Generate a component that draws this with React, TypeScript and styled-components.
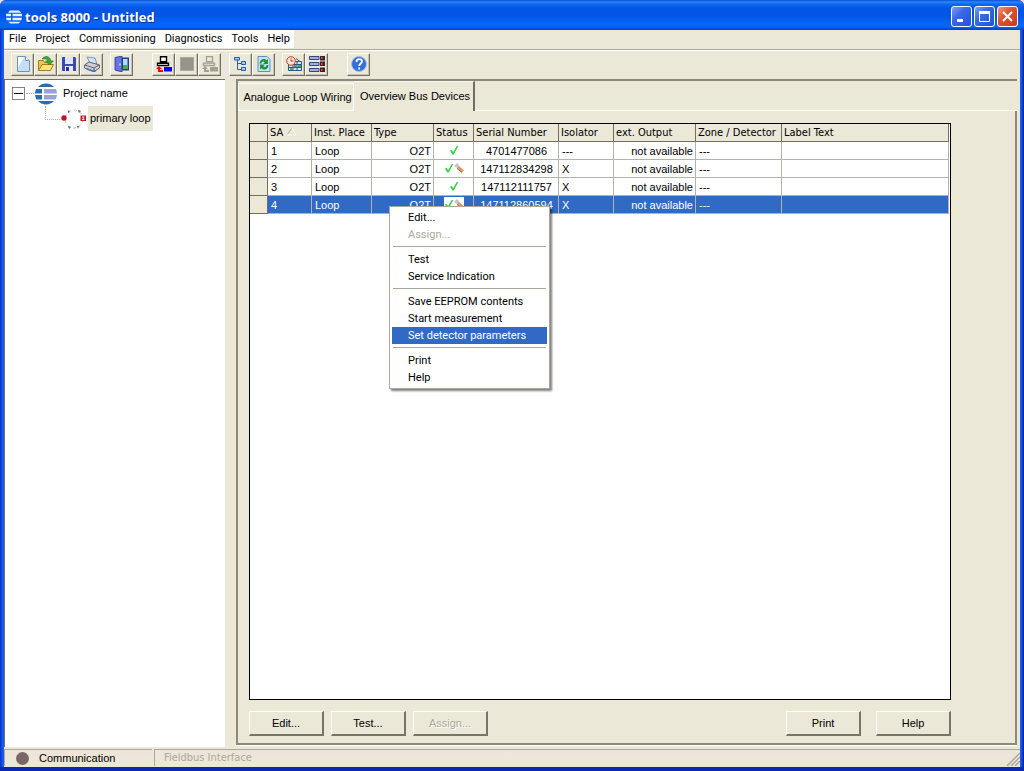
import React, { useState } from "react";
import styled, { createGlobalStyle, css } from "styled-components";

const face = "#ebe8d8";
const shade = "#aca899";
const dark = "#716f64";
const select = "#316ac5";
const menuFont = 'Roboto, "Noto Sans", sans-serif';
const headFont = '"DejaVu Sans Condensed", "Noto Sans", sans-serif';
const sans = '"Liberation Sans", Arial, sans-serif';

const Global = createGlobalStyle`
  *, *::before, *::after { box-sizing: border-box; }
  html, body { margin: 0; background: #f3ddd6; }
  body { font: 11px/14px ${sans}; color: #000; }
  button { font: inherit; color: inherit; margin: 0; padding: 0; border: 0; background: none; }
  ul { list-style: none; margin: 0; padding: 0; }
`;

const Frame = styled.div`
  display: flex;
  flex-direction: column;
  min-height: 100vh;
  padding: 0 4px 4px;
  border-radius: 6px 6px 0 0;
  background: linear-gradient(90deg, #0a30c8 0, #1660ee 3px, #1660ee calc(100% - 3px), #0018a0 100%);
  box-shadow: inset 0 -4px 0 #0a28b4;
`;

const TitleBar = styled.header`
  display: flex;
  align-items: center;
  gap: 3px;
  height: 30px;
  margin: 0 -4px;
  padding: 3px 6px 0;
  border-radius: 6px 6px 0 0;
  background: linear-gradient(#0a4fd0 0, #2a86fb 2px, #1168f2 4px, #0456e4 8px, #0256e6 16px, #0466fa 24px, #0464f8 27px, #0240c4 30px);
`;

const Title = styled.h1`
  flex: 1;
  margin: 0;
  color: #fff;
  font: bold 13px/16px "Open Sans", "Noto Sans", sans-serif;
  text-shadow: 1px 1px 0 #0a2f90;
`;

const Captions = styled.div`
  display: flex;
  gap: 2px;
`;

const Caption = styled.button<{ $close?: boolean }>`
  display: grid;
  place-items: center;
  width: 21px;
  height: 21px;
  border: 1px solid #fff;
  border-radius: 3px;
  background: ${(p) =>
    p.$close
      ? "linear-gradient(135deg, #ee9a80, #de5430 40%, #c8381c)"
      : "linear-gradient(135deg, #7d9ff5, #3a68e4 40%, #2152d8)"};
`;

const MenuBar = styled.nav`
  display: flex;
  height: 20px;
  background: ${face};
  border-bottom: 1px solid ${shade};
`;

const MenuList = styled.div`
  display: flex;
  height: 18px;
  background: #fff;
`;

const MenuButton = styled.button`
  padding: 0 4px 0 5px;
  font: 11px/18px ${menuFont};
`;

const ToolBar = styled.div`
  display: flex;
  align-items: center;
  height: 29px;
  padding: 0 0 2px 7px;
  background: ${face};
  border-top: 1px solid #fff;
`;

const ToolGroup = styled.div<{ $gap: number }>`
  display: flex;
  margin-right: ${(p) => p.$gap}px;
`;

const Tool = styled.button`
  display: grid;
  place-items: center;
  width: 23px;
  height: 23px;
  border: 1px solid;
  border-color: #fff ${dark} ${dark} #fff;
  box-shadow: inset -1px -1px 0 #c5c2b3;
`;

const Body = styled.div`
  flex: 1;
  display: flex;
  gap: 11px;
  background: ${face};
`;

const TreePane = styled.aside`
  flex: 0 0 221px;
  padding: 1px 0 0 7px;
  background: #fff;
  border: solid ${dark};
  border-width: 1px 0 0 1px;
`;

const TreeRow = styled.div<{ $level?: number }>`
  display: flex;
  align-items: center;
  height: 25px;
  padding-left: ${(p) => (p.$level ? 38 : 0)}px;
`;

const TreeLabel = styled.span<{ $selected?: boolean }>`
  padding: ${(p) => (p.$selected ? "0 2px" : "0 6px")};
  line-height: 25px;
  background: ${(p) => (p.$selected ? face : "none")};
`;

const Expander = styled.button`
  display: grid;
  place-items: center;
  width: 13px;
  height: 13px;
  border: 1px solid #848484;
  &::before { content: ""; width: 9px; height: 1px; background: #000; }
`;

const Dots = styled.span`
  width: 8px;
  margin: 0 1px;
  border-top: 1px dotted #b0b0b0;
`;

const Elbow = styled.span`
  align-self: flex-start;
  width: 15px;
  height: 14px;
  margin-left: -5px;
  border: dotted #b0b0b0;
  border-width: 0 0 1px 1px;
`;

const Main = styled.main`
  flex: 1;
  min-width: 0;
  display: flex;
  flex-direction: column;
  margin: 0 3px 2px 0;
  border: solid #8b897b;
  border-width: 2px 0 2px 2px;
  box-shadow: 0 1px 0 #fff;
`;

const TabStrip = styled.div`
  display: flex;
  align-items: flex-end;
  height: 30px;
  &::after { content: ""; flex: 1; align-self: flex-end; border-top: 1px solid #fff; }
`;

const Tab = styled.button<{ $active?: boolean }>`
  padding-left: 3px;
  ${(p) =>
    p.$active
      ? css`
          width: 121px;
          height: 30px;
          padding-bottom: 2px;
          border: solid;
          border-width: 1px 2px 0 0;
          border-color: #f6f5ee ${dark} transparent transparent;
        `
      : css`
          width: 116px;
          height: 28px;
          border: 1px solid #fff;
        `}
`;

const Page = styled.section`
  flex: 1;
  display: flex;
  flex-direction: column;
  padding: 12px 64px 7px 11px;
  border-right: 2px solid #8b897b;
`;

const GridBox = styled.div`
  position: relative;
  flex: 1;
  min-height: 300px;
  padding-right: 1px;
  border: 1px solid #000;
  background: #fff;
`;

const Grid = styled.table`
  width: 100%;
  border-collapse: separate;
  border-spacing: 0;
  table-layout: fixed;
`;

const Col = styled.col<{ $w?: number }>`
  width: ${(p) => (p.$w ? `${p.$w}px` : "auto")};
`;

const Head = styled.th`
  height: 18px;
  padding: 1px 2px 0;
  overflow: hidden;
  border: solid ${dark};
  border-width: 0 1px 1px 0;
  background: ${face};
  font: 11px/16px ${headFont};
  text-align: left;
  white-space: nowrap;
`;

const Cell = styled.td<{ $align?: string; $selected?: boolean }>`
  height: 18px;
  padding: 1px 2px 0 3px;
  border: solid #b4b2ac;
  border-width: 0 1px 1px 0;
  line-height: 16px;
  white-space: nowrap;
  text-align: ${(p) => p.$align ?? "left"};
  ${(p) => p.$selected && css`background: ${select}; color: #fff;`}
`;

const Gutter = styled.td`
  padding: 0;
  border: solid ${dark};
  border-width: 0 1px 1px 0;
  background: ${face};
`;

const StatusMark = styled.span<{ $lit?: boolean }>`
  display: inline-flex;
  vertical-align: top;
  height: 14px;
  background: ${(p) => (p.$lit ? "#fff" : "none")};
`;

const ContextMenu = styled.div`
  position: absolute;
  left: 139px;
  top: 82px;
  width: 161px;
  padding: 2px 2px;
  border: 1px solid ${shade};
  background: #fff;
  box-shadow: 2px 2px 2px rgba(0, 0, 0, 0.5);
`;

const ContextItem = styled.button<{ $current?: boolean }>`
  display: block;
  width: 100%;
  height: 17px;
  padding-left: 16px;
  font: 11px/16px ${menuFont};
  text-align: left;
  white-space: nowrap;
  &:disabled { color: ${shade}; }
  ${(p) => p.$current && css`background: ${select}; color: #fff;`}
`;

const Rule = styled.hr`
  height: 1px;
  margin: 3px 1px 4px;
  border: 0;
  background: ${shade};
`;

const Actions = styled.div`
  display: flex;
  gap: 7px;
  margin-top: 11px;
`;

const RightActions = styled.div`
  display: flex;
  gap: 15px;
  margin-left: auto;
`;

const Action = styled.button`
  width: 75px;
  height: 25px;
  border: solid;
  border-width: 1px 2px 2px 1px;
  border-color: #fff #77756a #77756a #fff;
  &:disabled { color: ${shade}; text-shadow: 1px 1px 0 #fff; }
`;

const StatusBar = styled.footer`
  display: flex;
  gap: 2px;
  height: 20px;
  padding: 2px 0 1px;
  background: ${face};
`;

const StatusPanel = styled.div<{ $grow?: boolean }>`
  flex: ${(p) => (p.$grow ? "1" : "0 0 148px")};
  display: flex;
  align-items: center;
  gap: 10px;
  padding-left: ${(p) => (p.$grow ? 9 : 11)}px;
  border: solid ${shade};
  border-width: 1px 0 0 1px;
  background: linear-gradient(#f0e3da, ${face} 70%);
  color: ${(p) => (p.$grow ? shade : "#000")};
  font-family: ${(p) => (p.$grow ? headFont : sans)};
`;

const Lamp = styled.span`
  width: 13px;
  height: 13px;
  border-radius: 50%;
  background: #7b6667;
`;

const Grip = styled.svg`
  align-self: flex-end;
  margin-left: auto;
`;

const Brand = ({ size, tone }: { size: number; tone?: boolean }) => (
  <svg width={size} height={size} viewBox="0 0 22 22" aria-hidden="true">
    {tone ? (
      <>
        <path d="M3 4a11 11 0 0 1 16 0zM3 18a11 11 0 0 0 16 0zM1 6h6v4.500H0A11 11 0 0 1 1 6zM0 12h7v4.500H1.500A11 11 0 0 1 0 12z" fill="#2a6cb0" />
        <path d="M9 6h12a11 11 0 0 1 1 4.500H9zM9 12h13a11 11 0 0 1-1.500 4.500H9z" fill="#98a4d6" />
      </>
    ) : (
      <path d="M5 2h13l3 3H3zM0 6.500h7v3.500H0zM9 6.500h13v3.500H9zM0 12h7v3.500H1zM9 12h13l-1 3.500H9zM3 17.500h17l-3 2.500H6z" fill="#e8f0ff" />
    )}
  </svg>
);

const LoopIcon = () => (
  <svg width="28" height="22" viewBox="0 0 28 22" aria-hidden="true">
    <ellipse cx="14" cy="11" rx="9" ry="9" fill="none" stroke="#b8b8b8" strokeDasharray="3 3" />
    <path d="M8 2l2 2-2 1zM18 2l3 1-2 2zM8 18l3 1-2 2zM17 18l2 0-1 3z" fill="#506070" />
    <circle cx="4" cy="10" r="2.7" fill="#c4141c" />
    <path d="M20.500 7.500h5.500v5.500h-5.500z" fill="#c4141c" />
    <path d="M22 9h2.500M22 11.500h2.500M23.200 9v2" stroke="#fff" strokeWidth=".9" />
  </svg>
);

const Tick = () => (
  <svg width="10" height="14" viewBox="0 0 11 14" aria-label="OK" role="img">
    <path d="M1 7.500l2-.5 1.500 2.500L8.500 2.500l1.700 0-5 9.500-1.500 0z" fill="#2fd23c" />
  </svg>
);

const Wrench = () => (
  <svg width="10" height="14" viewBox="0 0 10 14" aria-label="Service" role="img">
    <path d="M0 5l3-3 2 2v2L3 7z" fill="#c9c3c8" />
    <path d="M4 6l5 4.500" stroke="#e09a66" strokeWidth="3" />
    <path d="M3 7.500l5 4" stroke="#a6683f" strokeWidth="1" />
  </svg>
);

const icons: Record<string, React.ReactNode> = {
  New: (
    <>
      <path d="M2.500 .5h8l4 4v11h-12z" fill="#c5def8" stroke="#6f93c0" />
      <path d="M3 1h6l-6 11z" fill="#fff" />
      <path d="M10.500.5v4h4" fill="#fff" stroke="#6f93c0" />
    </>
  ),
  Open: (
    <>
      <path d="M.5 14V4.500h5l1 2h6V14z" fill="#f0c648" stroke="#a87d1c" />
      <path d="M.5 14.500L4 8.500h11.500l-3 6z" fill="#ffe27a" stroke="#a87d1c" />
      <path d="M4 3c3-4 8-3 9 2h2.500l-4 4-4-4h2.500C9.500 3 7 2.500 4 3z" fill="#39a83a" stroke="#1d7427" strokeWidth=".6" />
    </>
  ),
  Save: (
    <>
      <path d="M1 1h13l1 1v13H1z" fill="#3a48bc" />
      <path d="M4 1h8v7H4z" fill="#dfe4fb" />
      <path d="M4 10h8v5H4z" fill="#e9ecff" />
      <path d="M5 11h3v4H5z" fill="#26309a" />
    </>
  ),
  Print: (
    <>
      <path d="M3 1l8 1 2 6-7-1z" fill="#cfe3fb" stroke="#6c84a8" strokeWidth=".8" />
      <path d="M.5 9L5 6l10.500 3v3L10 15.500.5 12z" fill="#cfcfd4" stroke="#55555c" strokeWidth=".9" />
      <path d="M1 9l9 3 5-3M10 12v3" fill="none" stroke="#55555c" strokeWidth=".9" />
      <path d="M3 13l7 2.500 2-1" fill="none" stroke="#3d72c8" strokeWidth="1.500" />
    </>
  ),
  Exit: (
    <>
      <path d="M2 1.500h13v13H2z" fill="#2a37a0" />
      <path d="M9 3h4.500v10H9z" fill="#a9e0f5" />
      <path d="M9 9h4.500v4H9z" fill="#4bad4a" />
      <path d="M1 1.500L8 0v16l-7-2z" fill="#6674dc" stroke="#26309a" strokeWidth=".8" />
      <path d="M6 7.500v2" stroke="#fff" />
    </>
  ),
  "Read device": (
    <>
      <path d="M4.500 .7h6v5h-6zM1.500 7.200h11v2.300h-11z" fill="#fff" stroke="#000" strokeWidth="1.400" />
      <path d="M0 13l3-3 3 3z" fill="#f00" />
      <path d="M3 12v3h4" stroke="#f00" strokeWidth="2" fill="none" />
      <path d="M8 11h8v4.500H8z" fill="#00f" />
    </>
  ),
  Stop: <path d="M1.500 1.500h13v13h-13z" fill="#96948a" stroke="#aaa79b" />,
  "Write device": (
    <>
      <path d="M4.500 .7h6v5h-6zM1.500 7.200h11v2.300h-11z" fill="none" stroke="#a19e92" strokeWidth="1.300" />
      <path d="M0 13l3-3 3 3zM8 11h8v4.500H8z" fill="#a19e92" />
      <path d="M3 12v3h4" stroke="#a19e92" strokeWidth="2" fill="none" />
    </>
  ),
  Tree: (
    <>
      <path d="M4.500 4v9.500H9M4.500 7.500H9" fill="none" stroke="#2a5fb8" />
      <path d="M1.500 1.500h5v2.500h-5zM8.500 5.500h4v3h-4zM8.500 11.500h4v3h-4z" fill="#a9cdf5" stroke="#2458b4" />
    </>
  ),
  Refresh: (
    <>
      <path d="M2 .5h9l3 3v12H2z" fill="#c8e2fa" stroke="#5d8fc6" />
      <path d="M3.500 7.500c0-4.500 5-6 7-3.200L12 3v5H7l1.700-1.700C7 4.800 5.500 6 5.500 7.500zM12.500 9c0 4.500-5 6-7 3.200L4 13.500v-5h5l-1.700 1.700C9 11.700 10.500 10.500 10.500 9z" fill="#1f9432" />
    </>
  ),
  Measure: (
    <>
      <path d="M2.500 5.500h13v9h-13z" fill="#cfe6f7" stroke="#2b568c" />
      <path d="M3 8.500h12M3 11.500h12M7 6v8M11 6v8" stroke="#2b568c" />
      <path d="M8 9h2.500v2H8zM12 9h3v2h-3zM4 12h2.500v2H4z" fill="#53a04f" />
      <path d="M10 2.500l4 3" stroke="#555" />
      <circle cx="5" cy="5" r="4.300" fill="#fbe6d8" stroke="#d0352b" />
      <path d="M5 2.500V5h2.500" fill="none" stroke="#d0352b" />
    </>
  ),
  "Device list": (
    <>
      <path d="M.5.500h9.500v3H.5zM.5 6.500h9.500v3H.5zM.5 12.500h9.500v3H.5z" fill="#9cb0e4" stroke="#39457a" />
      <path d="M11 0h5v4.500h-5zM11 5.500h5v4.500h-5zM11 11.500h5V16h-5z" fill="#3d2028" />
      <path d="M12 2h1.500M12 8h1.500M12 14h1.500" stroke="#e84a48" strokeWidth="2" />
    </>
  ),
  Help: (
    <>
      <circle cx="8" cy="8" r="7.500" fill="#3470d8" stroke="#a9bfe8" />
      <path d="M5.500 6c0-4 5.500-3.500 5.500-.5C11 7.500 8.200 7.500 8.200 10M8.200 11.500v2" fill="none" stroke="#fff" strokeWidth="1.800" />
    </>
  ),
};

const toolGroups: { gap: number; names: string[] }[] = [
  { gap: 7, names: ["New", "Open", "Save", "Print"] },
  { gap: 19, names: ["Exit"] },
  { gap: 8, names: ["Read device", "Stop", "Write device"] },
  { gap: 7, names: ["Tree", "Refresh"] },
  { gap: 19, names: ["Measure", "Device list"] },
  { gap: 0, names: ["Help"] },
];

const columns: [string, number?][] = [
  ["SA", 44],
  ["Inst. Place", 60],
  ["Type", 62],
  ["Status", 40],
  ["Serial Number", 85],
  ["Isolator", 55],
  ["ext. Output", 82],
  ["Zone / Detector", 86],
  ["Label Text"],
];

const devices = [
  { sa: 1, serial: "4701477086", isolator: "---", service: false },
  { sa: 2, serial: "147112834298", isolator: "X", service: true },
  { sa: 3, serial: "147112111757", isolator: "X", service: false },
  { sa: 4, serial: "147112860594", isolator: "X", service: true },
];

const contextGroups = [
  ["Edit...", "Assign..."],
  ["Test", "Service Indication"],
  ["Save EEPROM contents", "Start measurement", "Set detector parameters"],
  ["Print", "Help"],
];

export default function App() {
  const [selected, setSelected] = useState(4);
  return (
    <>
      <Global />
      <Frame>
        <TitleBar>
          <Brand size={16} />
          <Title>tools 8000 - Untitled</Title>
          <Captions>
            <Caption aria-label="Minimize">
              <svg width="15" height="15"><path d="M3 10h6v3H3z" fill="#fff" /></svg>
            </Caption>
            <Caption aria-label="Maximize">
              <svg width="15" height="15"><path d="M2.500 4v8.500h10V4" fill="none" stroke="#fff" /><path d="M2 2h11v3H2z" fill="#fff" /></svg>
            </Caption>
            <Caption aria-label="Close" $close>
              <svg width="15" height="15"><path d="M3 3l9 9m0-9l-9 9" stroke="#fff" strokeWidth="2" /></svg>
            </Caption>
          </Captions>
        </TitleBar>

        <MenuBar>
          <MenuList>
            {["File", "Project", "Commissioning", "Diagnostics", "Tools", "Help"].map((m) => (
              <MenuButton key={m}>{m}</MenuButton>
            ))}
          </MenuList>
        </MenuBar>

        <ToolBar role="toolbar">
          {toolGroups.map((g) => (
            <ToolGroup key={g.names[0]} $gap={g.gap}>
              {g.names.map((n) => (
                <Tool key={n} aria-label={n} disabled={n === "Stop" || n === "Write device"}>
                  <svg width="16" height="16" viewBox="0 0 16 16">{icons[n]}</svg>
                </Tool>
              ))}
            </ToolGroup>
          ))}
        </ToolBar>

        <Body>
          <TreePane>
            <ul>
              <li>
                <TreeRow>
                  <Expander aria-label="Collapse" />
                  <Dots />
                  <Brand size={22} tone />
                  <TreeLabel>Project name</TreeLabel>
                </TreeRow>
                <ul>
                  <li>
                    <TreeRow $level={1}>
                      <Elbow />
                      <LoopIcon />
                      <TreeLabel $selected>primary loop</TreeLabel>
                    </TreeRow>
                  </li>
                </ul>
              </li>
            </ul>
          </TreePane>

          <Main>
            <TabStrip role="tablist">
              <Tab role="tab">Analogue Loop Wiring</Tab>
              <Tab role="tab" aria-selected $active>Overview Bus Devices</Tab>
            </TabStrip>
            <Page>
              <GridBox>
                <Grid>
                  <colgroup>
                    <Col $w={18} />
                    {columns.map(([name, w]) => <Col key={name} $w={w} />)}
                  </colgroup>
                  <thead>
                    <tr>
                      <Head aria-label="Row" />
                      {columns.map(([name]) => (
                        <Head key={name}>
                          {name}
                          {name === "SA" && (
                            <svg width="14" height="8" viewBox="0 0 14 8" aria-hidden="true">
                              <path d="M4 7l5-7" stroke="#aca899" fill="none" />
                              <path d="M9 0l4 7H4" stroke="#fff" fill="none" />
                            </svg>
                          )}
                        </Head>
                      ))}
                    </tr>
                  </thead>
                  <tbody>
                    {devices.map((d) => {
                      const on = d.sa === selected;
                      return (
                        <tr key={d.sa} onClick={() => setSelected(d.sa)}>
                          <Gutter />
                          <Cell $selected={on}>{d.sa}</Cell>
                          <Cell $selected={on}>Loop</Cell>
                          <Cell $selected={on} $align="right">O2T</Cell>
                          <Cell $selected={on} $align="center">
                            <StatusMark $lit={on}>
                              <Tick />
                              {d.service && <Wrench />}
                            </StatusMark>
                          </Cell>
                          <Cell $selected={on} $align="center">{d.serial}</Cell>
                          <Cell $selected={on}>{d.isolator}</Cell>
                          <Cell $selected={on} $align="right">not available</Cell>
                          <Cell $selected={on}>---</Cell>
                          <Cell $selected={on} />
                        </tr>
                      );
                    })}
                  </tbody>
                </Grid>
                <ContextMenu role="menu">
                  {contextGroups.map((group, i) => (
                    <React.Fragment key={group[0]}>
                      {i > 0 && <Rule />}
                      {group.map((item) => (
                        <ContextItem
                          key={item}
                          role="menuitem"
                          disabled={item === "Assign..."}
                          $current={item === "Set detector parameters"}
                        >
                          {item}
                        </ContextItem>
                      ))}
                    </React.Fragment>
                  ))}
                </ContextMenu>
              </GridBox>
              <Actions>
                <Action>Edit...</Action>
                <Action>Test...</Action>
                <Action disabled>Assign...</Action>
                <RightActions>
                  <Action>Print</Action>
                  <Action>Help</Action>
                </RightActions>
              </Actions>
            </Page>
          </Main>
        </Body>

        <StatusBar>
          <StatusPanel>
            <Lamp />
            Communication
          </StatusPanel>
          <StatusPanel $grow>
            Fieldbus Interface
            <Grip width="14" height="14" viewBox="0 0 14 14" aria-hidden="true">
              <path d="M1 14L14 1M5 14l9-9M9 14l5-5" stroke="#aca899" strokeWidth="1.500" />
            </Grip>
          </StatusPanel>
        </StatusBar>
      </Frame>
    </>
  );
}
